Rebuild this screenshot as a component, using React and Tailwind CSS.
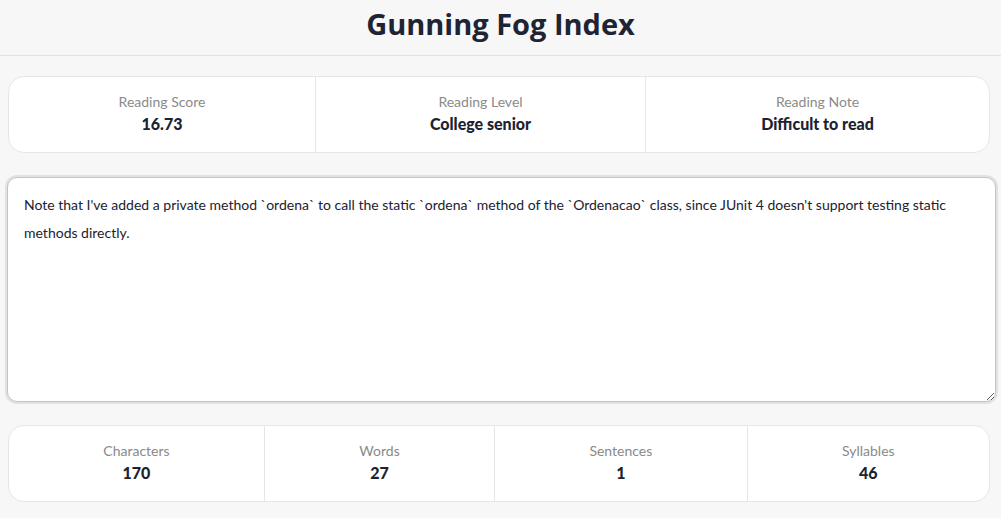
import { useState } from "react";

const TEXT =
  "Note that I've added a private method `ordena` to call the static `ordena` method of the `Ordenacao` class, since JUnit 4 doesn't support testing static methods directly.";

function StatCard({ items }) {
  return (
    <div className="flex bg-white border border-[#e6e6e6] rounded-2xl">
      {items.map((it, i) => (
        <div
          key={it.label}
          className={`${it.w} flex flex-col items-center justify-center h-[75px] px-4 ${
            i > 0 ? "border-l border-[#e6e6e6]" : ""
          }`}
        >
          <span className="text-[14px] leading-[18px] text-[#8a8a8a]">{it.label}</span>
          <span className="text-[16px] leading-[26px] font-black text-[#1c2230]">{it.value}</span>
        </div>
      ))}
    </div>
  );
}

export default function App() {
  const [text, setText] = useState(TEXT);

  return (
    <div
      className="min-h-[518px] bg-[#f7f7f7] text-[#1c2230]"
      style={{ fontFamily: "Lato, 'Open Sans', sans-serif" }}
    >
      {/* Header */}
      <header className="h-[56px] flex items-center justify-center border-b border-[#e2e2e2] pb-2">
        <h1
          className="text-[29px] leading-[36px] font-bold text-[#1e2433]"
          style={{ fontFamily: "'Open Sans', sans-serif" }}
        >
          Gunning Fog Index
        </h1>
      </header>

      <main className="px-2 pt-5 flex flex-col">
        <div className="mr-[3px]">
          <StatCard
            items={[
              { label: "Reading Score", value: "16.73", w: "w-[306px]" },
              { label: "Reading Level", value: "College senior", w: "w-[330px]" },
              { label: "Reading Note", value: "Difficult to read", w: "flex-1" },
            ]}
          />
        </div>

        {/* Text input */}
        <div className="mt-[22px] -mx-[3px] mr-[-5px] p-[2px] rounded-[12px] bg-[#e2e2e2]">
          <textarea
            value={text}
            onChange={(e) => setText(e.target.value)}
            spellCheck
            className="block w-full h-[225px] resize-y bg-white border border-[#c4c4c4] rounded-[10px] px-4 pt-[13px] text-[14px] leading-[28px] text-[#1c2230] outline-none"
            style={{ fontFamily: "Lato, 'Open Sans', sans-serif" }}
          />
        </div>

        <div className="mt-[21px] mr-[3px]">
          <StatCard
            items={[
              { label: "Characters", value: "170", w: "flex-auto" },
              { label: "Words", value: "27", w: "flex-auto" },
              { label: "Sentences", value: "1", w: "flex-auto" },
              { label: "Syllables", value: "46", w: "flex-auto" },
            ]}
          />
        </div>
      </main>
    </div>
  );
}
